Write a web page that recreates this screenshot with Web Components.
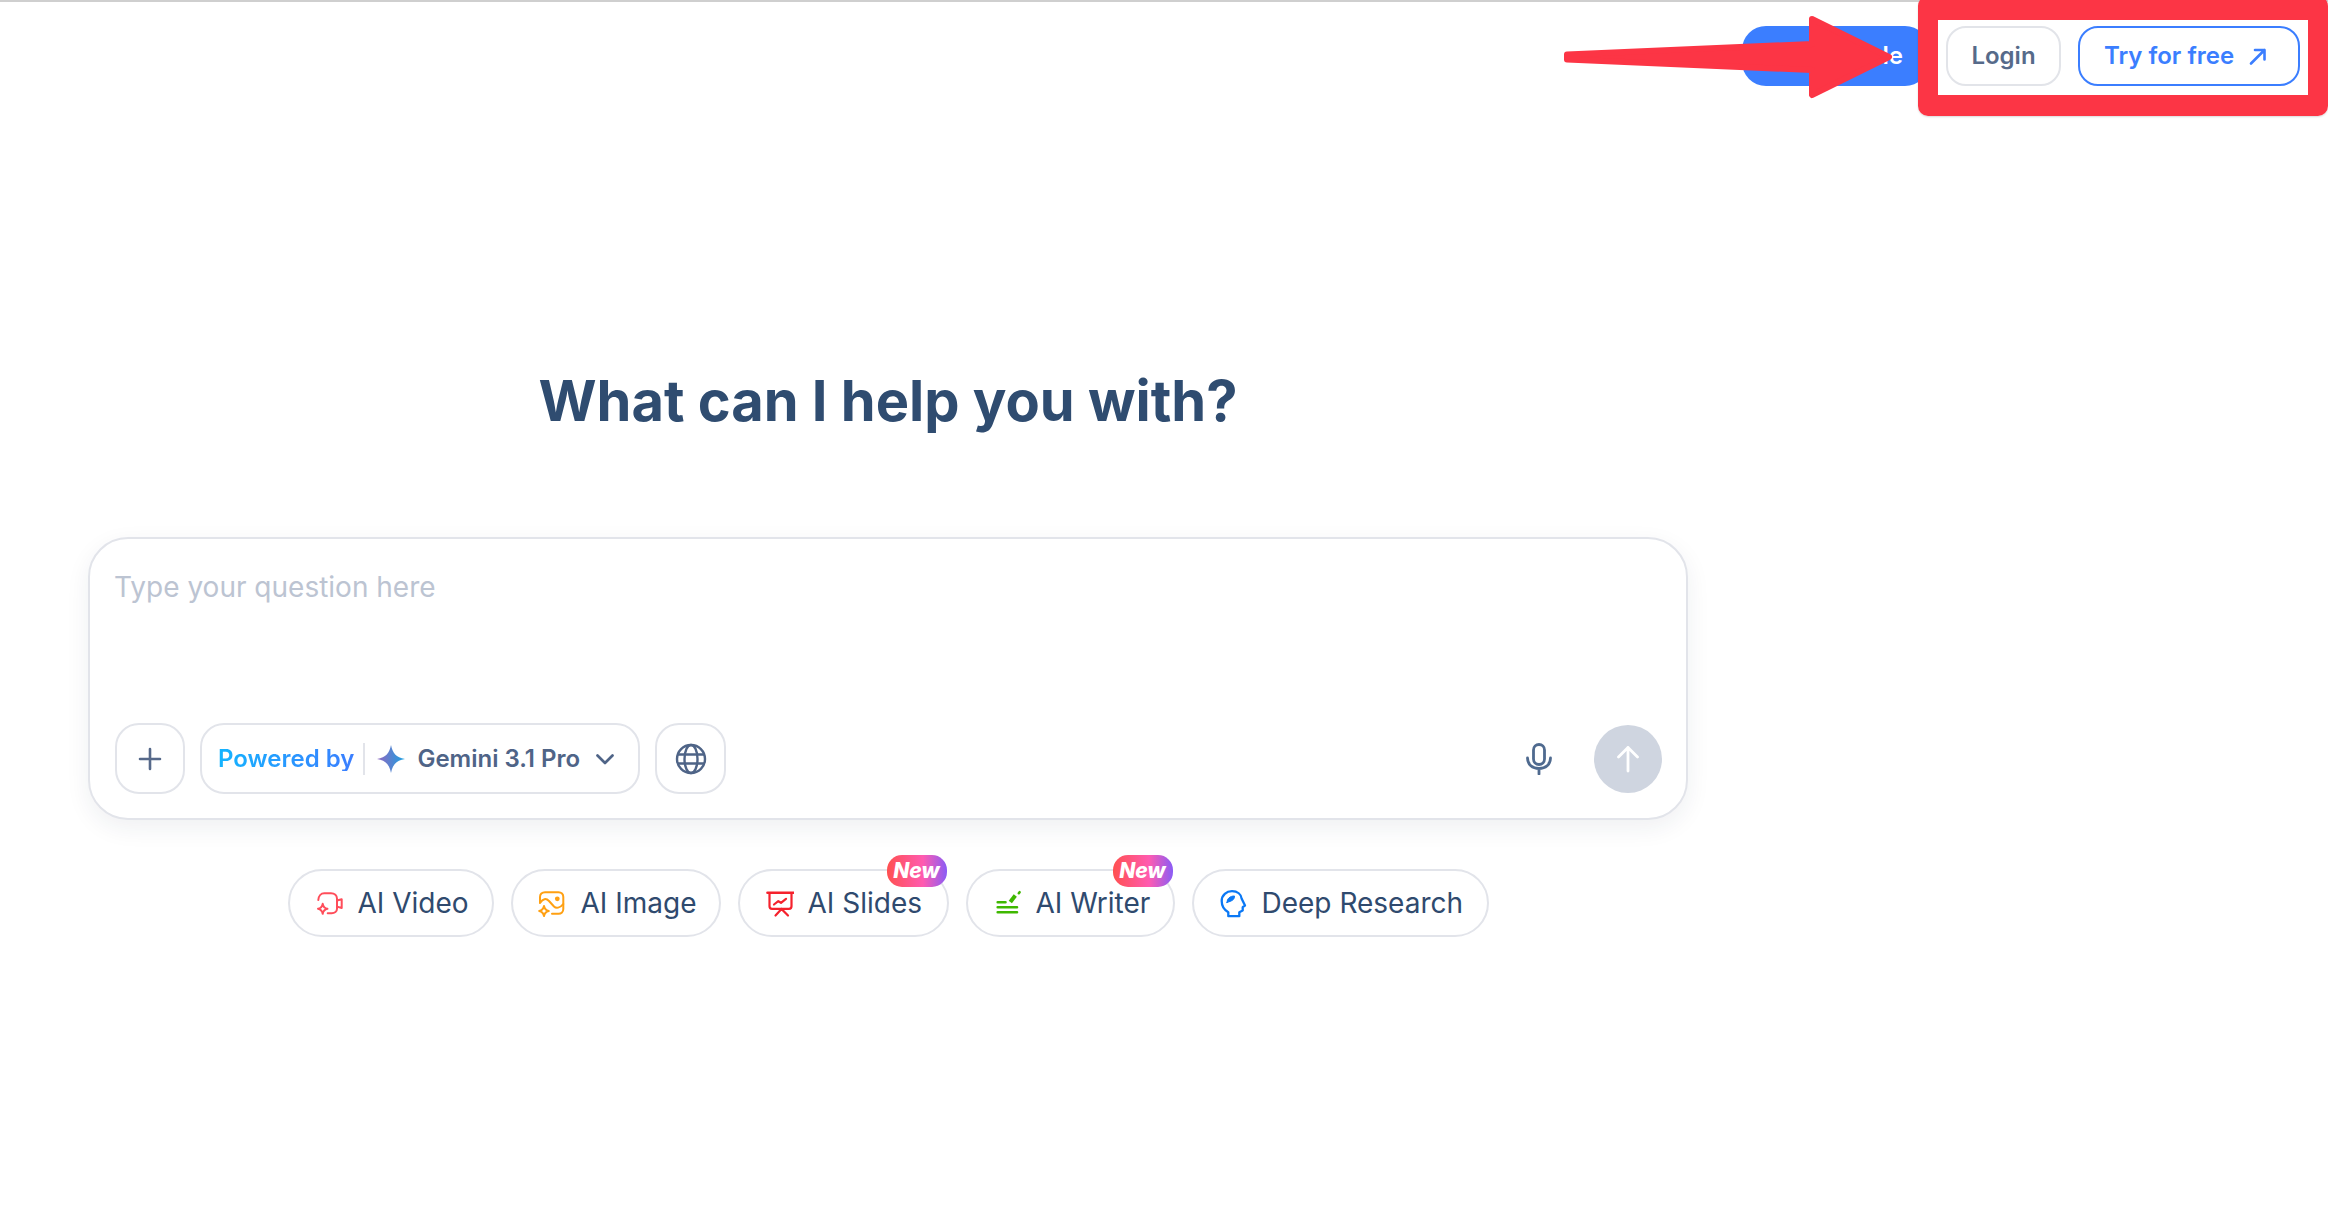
<!DOCTYPE html>
<html lang="en"><head><meta charset="utf-8"><title>What can I help you with?</title>
<style>
html,body{margin:0;padding:0;background:#fff;height:100%;overflow:hidden}
body{font-family:Inter,"Liberation Sans",sans-serif;position:relative}
</style></head>
<body>
<top-bar>
  <action-btn kind="solid">Schedule</action-btn>
  <action-btn kind="plain" style="width:115px">Login</action-btn>
  <action-btn kind="outline" style="width:222px">Try for free
    <svg slot="icon" width="22" height="22" viewBox="0 0 22 22" fill="none" stroke="#3b7eff" stroke-width="2.600" stroke-linecap="round" stroke-linejoin="round"><path d="M3 18.500 16.500 5M7 5h9.500v9.500"/></svg>
  </action-btn>
</top-bar>
<main-view>
  <ask-composer></ask-composer>
  <chip-row>
    <tool-chip w="206"><svg slot="icon" viewBox="0 0 29 29" fill="none" stroke="#ff4d5a" stroke-width="2" stroke-linecap="round" stroke-linejoin="round"><path d="M3.300 11C3.500 7 6 4.200 9.300 4.200H16c3.600 0 6 2.400 6 5.600v10c0 2.600-2.400 4.400-5.300 4.400h-4"/><path d="M22 11.500 26.700 10.200v8.800L22 17.600"/><path d="M7.700 14.800c.5 3 1.800 4.400 4.800 5-3 .6-4.300 2-4.800 5-.5-3-1.800-4.400-4.700-5 2.900-.6 4.200-2 4.700-5Z"/></svg>AI Video</tool-chip>
    <tool-chip w="210"><svg slot="icon" viewBox="0 0 29 29" fill="none" stroke="#ffa012" stroke-width="2" stroke-linecap="round" stroke-linejoin="round"><path d="M2 13.500V8c0-2.800 2-4.800 5-4.800h13.500c2.800 0 4.800 2 4.800 4.800v12c0 2.800-2 4.800-4.800 4.800H14"/><path d="M2 14C5 9.500 8 9 11 12l5 5.500c2 2 6 1.800 9.300-2.500"/><circle cx="19.300" cy="9.800" r="1.400" fill="#ffa012"/><path d="M6 17c.5 3 1.500 4.300 4.800 5-3.300.7-4.300 2-4.800 5-.5-3-1.500-4.300-4.800-5 3.300-.7 4.300-2 4.800-5Z"/></svg>AI Image</tool-chip>
    <tool-chip w="211" badge><svg slot="icon" viewBox="0 0 29 29" fill="none" stroke="#f5222d" stroke-width="2.200" stroke-linecap="round" stroke-linejoin="round"><path d="M2.500 3.800h26" stroke-width="2.600"/><path d="M4.500 4v13.300c0 1.500 1 2.500 2.500 2.500h17c1.500 0 2.500-1 2.500-2.500V4"/><path d="M9 15.500l4.300-3.300 2.700 1.600 5-4M16.500 20 10.500 26.500M16.500 20l6.500 6.500"/></svg>AI Slides</tool-chip>
    <tool-chip w="209" badge><svg slot="icon" viewBox="0 0 29 29" fill="none" stroke="#3fb800" stroke-width="2.600" stroke-linecap="round" stroke-linejoin="round"><path d="M4.700 13.200H12.500M4.700 18.200H24M4.700 23.200H24"/><path d="M17.300 13 22.300 6.500" stroke-width="4" stroke-linecap="butt"/><path d="M25.800 4.200 26.600 3.200" stroke-width="2.600"/></svg>AI Writer</tool-chip>
    <tool-chip w="297"><svg slot="icon" viewBox="0 0 29 29" fill="none" stroke="#0a78f5" stroke-width="2.300" stroke-linecap="round" stroke-linejoin="round"><path d="M9.300 27.200V23.200C5 20.800 2.700 16.500 2.700 12 2.700 6.200 7.500 2.200 13 2.200c5.500 0 9.200 3.200 9.700 7.600l3.300 6.700-2.300 1.700v3.300l-3.400 1.700v4Z"/><path d="M8 13.500C8 9.500 11 7 15.500 7c0 3-1.500 4.200-3.500 5-1.500.6-2.800 1.200-4 1.500Z" fill="#0a78f5" stroke-width="1"/></svg>Deep Research</tool-chip>
  </chip-row>
</main-view>
<callout-layer></callout-layer>
<script>
function mk(name, html, extra){
  const T=document.createElement('template');T.innerHTML=html;
  customElements.define(name,class extends HTMLElement{
    constructor(){super();this.attachShadow({mode:'open'}).append(T.content.cloneNode(true));}
    connectedCallback(){extra&&extra.call(this)}
  });
}
mk('top-bar',`<style>:host{display:flex;justify-content:flex-end;gap:17px;box-sizing:border-box;height:86px;padding:24px 28px 0;border-top:2px solid #cfcfcf}</style><slot></slot>`);
mk('action-btn',`<style>
:host{display:inline-flex;align-items:center;justify-content:center;gap:14px;box-sizing:border-box;height:60px;border-radius:20px;font:600 24px/1 Inter,"Liberation Sans",sans-serif;white-space:nowrap;background:#fff}
:host([kind=solid]){width:187px;background:#3b7eff;color:#fff;justify-content:flex-end;padding-right:26px;border-radius:24px}
:host([kind=plain]){border:2px solid #e2e4e9;color:#566a8a}
:host([kind=outline]){border:2px solid #3b7eff;color:#3b7eff;padding-right:4px}
</style><slot></slot><slot name="icon"></slot>`);
mk('main-view',`<style>:host{display:block;box-sizing:border-box;width:1600px;margin-left:88px}
h1{margin:281px 0 102px;text-align:center;font:700 56px/68px Inter,"Liberation Sans",sans-serif;color:#2f4c70;letter-spacing:0}
</style><h1>What can I help you with?</h1><slot></slot>`);
mk('ask-composer',`<style>
:host{display:flex;flex-direction:column;justify-content:space-between;box-sizing:border-box;height:283px;padding:31px 24px 24px 25px;border:2px solid #e2e4ea;border-radius:40px;background:#fff;box-shadow:0 8px 24px rgba(30,40,70,.07)}
.ph{font:400 28px/34px Inter,"Liberation Sans",sans-serif;color:#bcc4d2;margin-left:-1px}
.row{display:flex;align-items:center;gap:15px}
.b{display:flex;align-items:center;justify-content:center;box-sizing:border-box;height:71px;border:2px solid #e2e4ea;border-radius:24px;background:#fff}
.sq{width:70px}.gl{width:71px}
.model{width:440px;padding:0 0 0 16px;justify-content:flex-start;font:500 24px/1 Inter,"Liberation Sans",sans-serif;color:#4f6487;white-space:nowrap}
.pw{font-weight:600;background:linear-gradient(90deg,#14b4ff,#3b7eff);-webkit-background-clip:text;background-clip:text;color:transparent}
.div{width:2px;height:32px;background:#e2e4ea;margin:0 12px 0 9px}
.nm{margin:0 15px 0 12px;font-weight:600}
.sp{flex:1}
.mic{margin-right:27px;display:flex}
.send{width:68px;height:68px;border-radius:50%;background:#cfd5e0;display:flex;align-items:center;justify-content:center}
</style>
<div class="ph">Type your question here</div>
<div class="row">
<div class="b sq"><svg width="24" height="24" viewBox="0 0 24 24" fill="none" stroke="#56698a" stroke-width="2.600" stroke-linecap="round"><path d="M12 2v20M2 12h20"/></svg></div>
<div class="b model"><span class="pw">Powered by</span><span class="div"></span>
<svg width="28" height="28" viewBox="0 0 28 28"><defs><linearGradient id="g" x1="0" x2="1" y1="0" y2="0"><stop offset="0" stop-color="#9168c0"/><stop offset=".5" stop-color="#5684d1"/><stop offset="1" stop-color="#1ba1e3"/></linearGradient></defs><path fill="url(#g)" d="M14 0c1.500 8 5 12.500 14 14-9 1.500-12.500 6-14 14-1.500-8-5-12.500-14-14 9-1.500 12.500-6 14-14Z"/></svg>
<span class="nm">Gemini 3.1 Pro</span>
<svg width="20" height="20" viewBox="0 0 20 20" fill="none" stroke="#4f6487" stroke-width="2.700" stroke-linecap="round" stroke-linejoin="round"><path d="M2.500 6.500 10 14l7.500-7.500"/></svg></div>
<div class="b gl"><svg width="32" height="32" viewBox="0 0 32 32" fill="none" stroke="#4f6487" stroke-width="2.400"><circle cx="16" cy="16" r="14"/><ellipse cx="16" cy="16" rx="6.500" ry="14"/><path d="M2.500 11.500h27M2.500 20.500h27"/></svg></div>
<div class="sp"></div>
<span class="mic"><svg width="26" height="32" viewBox="0 0 26 32" fill="none" stroke="#4f6a8f" stroke-width="2.800" stroke-linecap="round"><rect x="7.500" y="1.500" width="11" height="20" rx="5.500"/><path d="M1.500 15c0 6.500 5 10.500 11.500 10.500S24.500 21.500 24.500 15M13 25.500V31"/></svg></span>
<div class="send"><svg width="24" height="28" viewBox="0 0 24 28" fill="none" stroke="#fff" stroke-width="2.800" stroke-linecap="round" stroke-linejoin="round"><path d="M12 26V2.500M2.500 12 12 2.500 21.500 12"/></svg></div>
</div>`);
mk('chip-row',`<style>:host{display:flex;justify-content:center;gap:17px;margin-top:49px}</style><slot></slot>`);
mk('tool-chip',`<style>
:host{display:inline-flex;align-items:center;position:relative;box-sizing:border-box;height:68px;padding:0 0 0 25px;border:2px solid #e2e4ea;border-radius:34px;background:#fff;font:400 28px/1 Inter,"Liberation Sans",sans-serif;color:#2f4a6e;white-space:nowrap}
::slotted(svg){width:29px;height:29px;margin-right:14px;flex:none}
.badge{display:none;position:absolute;right:0;top:-16px;width:60px;height:32px;border-radius:15px;background:linear-gradient(90deg,#ff5050,#ff5bb0 60%,#8a5cf6);color:#fff;font:italic 800 21px/32px Inter,"Liberation Sans",sans-serif;text-align:center}
:host([badge]) .badge{display:block}
</style><slot name="icon"></slot><slot></slot><span class="badge">New</span>`,function(){this.style.width=this.getAttribute('w')+'px'});
mk('callout-layer',`<style>
:host{display:block;position:absolute;inset:0;pointer-events:none}
svg{position:absolute;left:0;top:0;overflow:visible}
.box{position:absolute;left:1918px;top:-4px;width:410px;height:120px;box-sizing:border-box;border:solid #fc3545;border-width:24px 20px 21px 20px;border-radius:10px;box-shadow:0 1px 2px rgba(0,0,0,.15)}
</style>
<div class="box"></div>
<svg width="2328" height="1222" viewBox="0 0 2328 1222"><path d="M1567 54.500 1812 44 1812 19 1889 57 1812 95 1812 70 1567 59.500Z" fill="#fc3545" stroke="#fc3545" stroke-width="6" stroke-linejoin="round"/></svg>`);
</script>
</body></html>
